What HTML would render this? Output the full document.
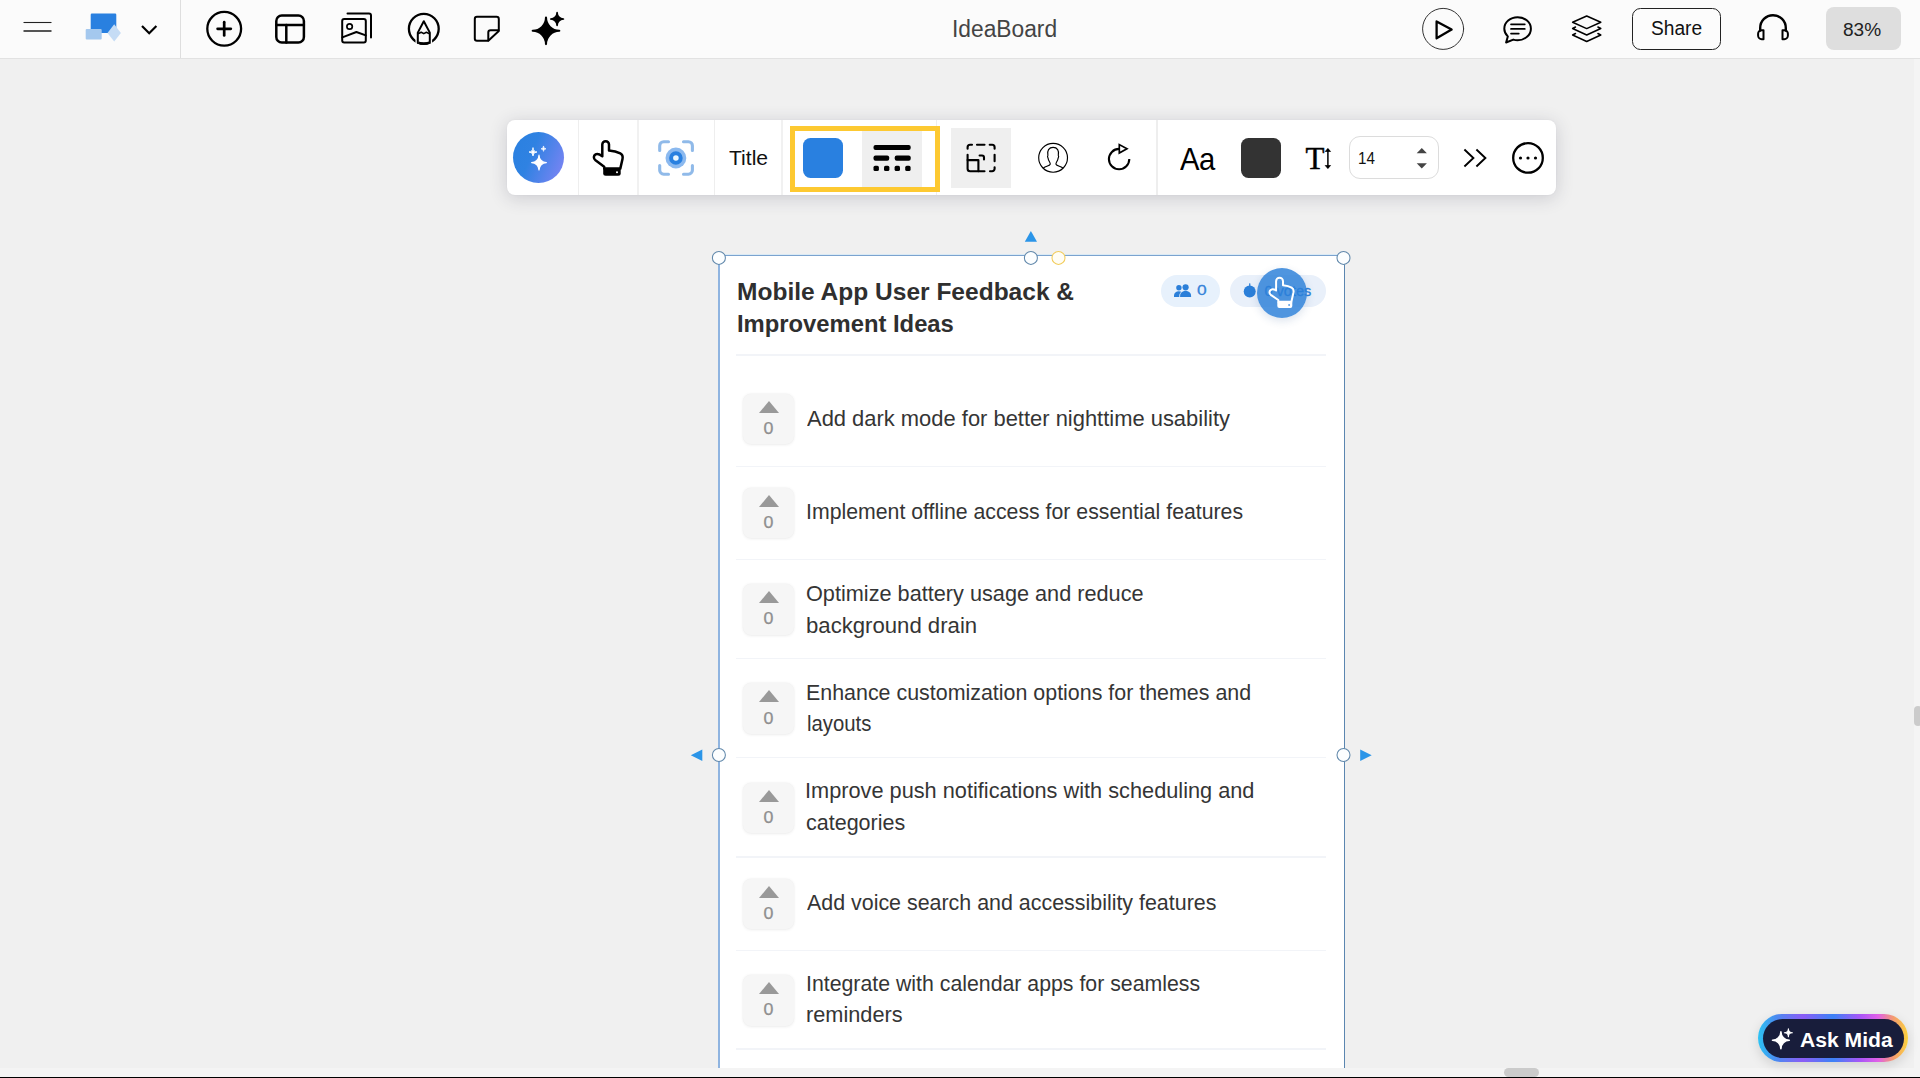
<!DOCTYPE html>
<html lang="en">
<head>
<meta charset="utf-8">
<title>IdeaBoard</title>
<style>
*{box-sizing:border-box;margin:0;padding:0}
html,body{width:1920px;height:1078px;overflow:hidden;background:#f0f0f0;font-family:"Liberation Sans",sans-serif;color:#333}
.abs{position:absolute}
#topbar{position:absolute;left:0;top:0;width:1920px;height:59px;background:#fbfbfb;border-bottom:1px solid #e2e2e2}
#topbar .vsep{position:absolute;left:180px;top:0;width:1px;height:58px;background:#dedede}
#topbar svg{position:absolute;overflow:visible}
#title{position:absolute;font-size:23.5px;line-height:30px;color:#444;white-space:nowrap;transform-origin:0 50%}
#share{position:absolute;left:1632px;top:8px;width:89px;height:42px;border:1.4px solid #222;border-radius:8.500px;background:#fcfcfc}
#sharet{position:absolute;font-size:19.5px;line-height:26px;color:#111;white-space:nowrap;transform-origin:0 50%}
#zoom{position:absolute;left:1826px;top:7px;width:75px;height:43px;border-radius:8px;background:#dedede}
#zoomt{position:absolute;font-size:18px;line-height:24px;color:#222;white-space:nowrap;transform-origin:0 50%}
/* floating toolbar */
#tb{position:absolute;left:507px;top:120px;width:1049px;height:75px;background:#fff;border-radius:8px;box-shadow:0 3px 18px rgba(40,40,70,.19),0 0 2px rgba(60,60,80,.05)}
#tb .sep{position:absolute;top:0;width:1px;height:75px;background:#eeeeee}
#tb svg{position:absolute;overflow:visible}
/* card */
#card{position:absolute;left:718px;top:254.600px;width:627.300px;height:813.400px;background:#fff;border-left:2px solid #8fb4e0;border-top:1.500px solid #7ba3cf;border-right:1.300px solid #5b86b0;box-shadow:0 -1px 0 rgba(200,230,250,.55)}
.hsep{position:absolute;left:736px;width:590px;height:1.4px;background:#f2f4f8}
.vbox{position:absolute;left:743.200px;width:50.700px;height:50.700px;border-radius:8px;background:#f6f6f6;box-shadow:0 0 0 .5px rgba(0,0,0,.02),0 .5px 3px rgba(0,0,0,.07)}
.vbox i{position:absolute;left:15.500px;top:7.200px;width:0;height:0;border-left:10.100px solid transparent;border-right:10.100px solid transparent;border-bottom:12.700px solid #999}
.vbox b{position:absolute;left:0;top:25.300px;width:51px;text-align:center;font-weight:400;font-size:16.500px;line-height:18px;color:#8f8f8f;transform:scaleX(1.08);-webkit-text-stroke:.25px #8f8f8f}
.it{position:absolute;font-size:21.5px;line-height:30px;color:#353535;white-space:nowrap;transform-origin:0 50%}
.ttl{position:absolute;font-weight:700;font-size:23.5px;line-height:32px;color:#2f2f2f;white-space:nowrap;transform-origin:0 50%}
.h{position:absolute;width:14px;height:14px;border-radius:50%;background:#fff;border:1.3px solid #5b8bb8}
</style>
</head>
<body>
<div id="topbar">
<div class="vsep"></div>
<svg style="left:0;top:0" width="620" height="58" viewBox="0 0 620 58" fill="none" stroke="#000" stroke-linecap="round" stroke-linejoin="round">
<!-- hamburger -->
<line x1="23.5" y1="22.5" x2="51.5" y2="22.5" stroke="#222" stroke-width="1.1" stroke-linecap="butt"/>
<line x1="23.5" y1="31" x2="51.5" y2="31" stroke="#555" stroke-width="2" stroke-linecap="butt"/>
<!-- shapes logo -->
<rect x="90.7" y="13.6" width="25.6" height="19.3" rx="1.2" fill="#2980e0" stroke="none"/>
<rect x="85.7" y="28.9" width="16" height="10.5" rx="1" fill="#a4c8ee" stroke="none"/>
<polygon points="114.2,24.2 120.9,32.9 114.2,41.6 107.5,32.9" fill="#c5dcf5" stroke="none"/>
<!-- chevron -->
<polyline points="142,26 149.2,33.2 156.4,26" stroke-width="2.2" stroke-linecap="butt" stroke-linejoin="miter"/>
<!-- plus circle -->
<circle cx="224.2" cy="28.8" r="16.9" stroke-width="2.3"/>
<line x1="217.6" y1="28.8" x2="230.8" y2="28.8" stroke-width="2.7"/>
<line x1="224.2" y1="22.2" x2="224.2" y2="35.4" stroke-width="2.7"/>
<!-- layout -->
<rect x="276.3" y="15.4" width="27.6" height="27.2" rx="5.5" stroke-width="2.5"/>
<line x1="276.3" y1="24.9" x2="303.9" y2="24.9" stroke-width="2.5"/>
<line x1="286.3" y1="25" x2="286.3" y2="42.5" stroke-width="2.5"/>
<!-- images -->
<rect x="342.2" y="18.9" width="23.6" height="23.5" rx="2" stroke-width="2"/>
<path d="M347.5 13.6 H369 a2 2 0 0 1 2 2 V37.5" stroke-width="2"/>
<circle cx="349.6" cy="26.5" r="2.7" stroke-width="1.7"/>
<polyline points="342.3,37.4 356.4,32 365.8,35.4" stroke-width="1.9"/>
<!-- pencil circle -->
<circle cx="423.8" cy="28.8" r="14.9" stroke-width="2.3"/>
<path d="M417.800 33.500 V44 M429.800 33.500 V44" stroke="#fbfbfb" stroke-width="4.600" stroke-linecap="butt"/>
<path d="M418.300 42.640 A14.900 14.900 0 0 0 429.300 42.640" stroke-width="2.300" stroke-linecap="butt"/>
<path d="M417.800 43 V32.600 L423.800 21.200 L429.800 32.600 V43" stroke-width="2"/>
<polyline points="418.600,33.400 421.200,32.200 423.800,33.600 426.400,32.200 429,33.400" stroke-width="1.600"/>
<!-- sticky -->
<path d="M477 16.8 H496.6 a2.2 2.2 0 0 1 2.2 2.2 V31 L488.3 40.7 H477 a2.2 2.2 0 0 1 -2.2 -2.2 V19 a2.2 2.2 0 0 1 2.2 -2.2 Z" stroke-width="2"/>
<path d="M488.3 40.4 V32.5 a2.3 2.3 0 0 1 2.3 -2.3 H498.4" stroke-width="2"/>
<!-- sparkle -->
<path d="M546.00 17.50 A13.30 13.30 0 0 0 559.30 30.80 A13.30 13.30 0 0 0 546.00 44.10 A13.30 13.30 0 0 0 532.70 30.80 A13.30 13.30 0 0 0 546.00 17.50 Z" fill="#000" stroke="#000" stroke-width="2.1" stroke-linejoin="round"/>
<path d="M557.10 12.70 A6.30 6.30 0 0 0 563.40 19.00 A6.30 6.30 0 0 0 557.10 25.30 A6.30 6.30 0 0 0 550.80 19.00 A6.30 6.30 0 0 0 557.10 12.70 Z" fill="#000" stroke="#000" stroke-width="1.7" stroke-linejoin="round"/>
</svg>
<svg style="left:1400px;top:0" width="420" height="58" viewBox="1400 0 420 58" fill="none" stroke="#000" stroke-linecap="round" stroke-linejoin="round">
<!-- play -->
<circle cx="1443.1" cy="28.9" r="20.5" stroke="#333" stroke-width="1"/>
<path d="M1436.6 21.4 L1451.6 29.6 L1436.6 38.3 Z" stroke-width="2.3"/>
<!-- chat -->
<path d="M1517.6 17.2 c7.4 0 13.3 5.1 13.3 11.5 s-5.9 11.5 -13.3 11.5 c-1.5 0 -3 -0.2 -4.300 -0.600 l-7.200 2.900 l1.700 -6.100 c-2.200 -2.100 -3.500 -4.800 -3.500 -7.700 c0 -6.400 5.900 -11.500 13.300 -11.500 Z" stroke-width="2"/>
<line x1="1511" y1="24.3" x2="1524.8" y2="24.3" stroke-width="1.7"/>
<line x1="1511" y1="28.9" x2="1524.8" y2="28.9" stroke-width="1.7"/>
<line x1="1511" y1="33.6" x2="1518.8" y2="33.6" stroke-width="1.7"/>
<!-- layers -->
<path d="M1586.700 16 L1600.800 22.300 L1586.700 28.600 L1572.600 22.300 Z" stroke-width="1.5"/>
<path d="M1575.500 27 L1572.600 28.500 L1586.700 35 L1600.800 28.500 L1597.900 27" stroke-width="1.5"/>
<path d="M1575.500 33.500 L1572.600 35 L1586.700 41.500 L1600.800 35 L1597.900 33.500" stroke-width="1.5"/>
<!-- headphones -->
<path d="M1760.2 30.5 V28 a12.8 12.8 0 0 1 25.600 0 V30.500" stroke-width="2.4"/>
<path d="M1763.500 30.200 v9 h-1.800 a3.600 3.600 0 0 1 -3.600 -3.600 v-1.800 a3.600 3.600 0 0 1 3.600 -3.600 Z" stroke-width="2"/>
<path d="M1782.500 30.200 v9 h1.800 a3.600 3.600 0 0 0 3.600 -3.600 v-1.800 a3.600 3.600 0 0 0 -3.600 -3.600 Z" stroke-width="2"/>
</svg>

<div id="title" style="left:951.66px;top:13.80px;transform:scaleX(0.9686)">IdeaBoard</div>
<div id="share"></div><div id="sharet" style="left:1650.93px;top:15px;transform:scaleX(0.9820)">Share</div>
<div id="zoom"></div><div id="zoomt" style="left:1843.47px;top:17.60px;transform:scaleX(1.0600)">83%</div>
</div>
<div id="tb">
<div class="sep" style="left:71px"></div>
<div class="sep" style="left:130px;width:2px;background:#f1f1f1"></div>
<div class="sep" style="left:207px"></div>
<div class="sep" style="left:274px;width:2px;background:#f1f1f1"></div>
<div class="sep" style="left:429px"></div>
<div class="sep" style="left:649px;width:2px;background:#eeeeee"></div>
<div class="abs" style="left:6px;top:12px;width:51px;height:51px;border-radius:50%;background:linear-gradient(112deg,#2a80e0 0%,#2f82e2 38%,#7d84f4 96%)"></div>
<div class="abs" style="left:355px;top:10px;width:60px;height:57px;background:#efefef"></div>
<div class="abs" style="left:283.300px;top:5.600px;width:150px;height:66px;border:5px solid #fdc931"></div>
<div class="abs" style="left:295.800px;top:17.900px;width:40.200px;height:40px;border-radius:7.500px;background:#2980e0"></div>
<div class="abs" style="left:444px;top:8px;width:60px;height:60px;background:#efefef"></div>
<div class="abs" id="ttl" style="transform-origin:0 50%;left:222.26px;top:25px;font-size:19.5px;line-height:26px;color:#111;transform:scaleX(1.0829)">Title</div>
<div class="abs" id="aa" style="transform-origin:0 50%;left:672.54px;top:18.50px;font-size:32px;line-height:40px;color:#000;letter-spacing:-0.5px;transform:scaleX(0.9132)">Aa</div>
<div class="abs" style="left:734px;top:17.900px;width:40.100px;height:39.900px;border-radius:7.500px;background:#333"></div>
<div class="abs" id="tt" style="transform-origin:0 50%;left:798.50px;top:19px;font-family:'Liberation Serif',serif;font-size:31px;line-height:40px;color:#000;-webkit-text-stroke:.45px #000;transform:scaleX(1.0000)">T</div>
<div class="abs" style="left:842px;top:16px;width:90px;height:43px;border:1px solid #dcdcdc;border-radius:11px;background:#fff"></div>
<div class="abs" id="n14" style="transform-origin:0 50%;left:850.85px;top:29.00px;font-size:16px;line-height:20px;color:#111;transform:scaleX(0.9471)">14</div>
<svg style="left:0;top:0" width="1049" height="75" viewBox="507 120 1049 75" fill="none" stroke="#000" stroke-linecap="round" stroke-linejoin="round">
<!-- sparkles in circle -->
<g fill="#fff" stroke="none">
<path d="M539.00 155.20 A7.40 7.40 0 0 0 546.40 162.60 A7.40 7.40 0 0 0 539.00 170.00 A7.40 7.40 0 0 0 531.60 162.60 A7.40 7.40 0 0 0 539.00 155.20 Z" stroke="#fff" stroke-width="1.2" stroke-linejoin="round"/>
<path d="M533.00 148.00 A4.00 4.00 0 0 0 537.00 152.00 A4.00 4.00 0 0 0 533.00 156.00 A4.00 4.00 0 0 0 529.00 152.00 A4.00 4.00 0 0 0 533.00 148.00 Z" stroke="#fff" stroke-width="0.9" stroke-linejoin="round"/>
<path d="M543.50 146.35 A2.50 2.50 0 0 0 546.00 148.85 A2.50 2.50 0 0 0 543.50 151.35 A2.50 2.50 0 0 0 541.00 148.85 A2.50 2.50 0 0 0 543.50 146.35 Z" stroke="#fff" stroke-width="0.7" stroke-linejoin="round"/>
</g>
<!-- hand pointer -->
<path d="M602.300 156.200 V144.600 a3.350 3.350 0 0 1 6.700 0 V150.600 C613 150.900 617.500 152 620.300 153.400 C622.400 154.500 623 156.600 622.500 159 L620.300 168.600 H604.200 V166.800 L595.500 160.300 C593.200 158.400 593.400 155.600 595.600 154.400 C597.400 153.400 599.500 154.200 602.300 156.200 Z" fill="#fff" stroke-width="2.500"/>
<path d="M603.200 168.600 H620.700 V173.200 a2.500 2.500 0 0 1 -2.500 2.500 H605.700 a2.500 2.500 0 0 1 -2.500 -2.500 Z" fill="#000" stroke="none"/>
<circle cx="617" cy="172.300" r="1" fill="#fff" stroke="none"/>
<!-- focus icon -->
<g stroke="#90bae9" stroke-width="3.100">
<path d="M659.700 150.500 V145.700 a4 4 0 0 1 4 -4 H668.500"/>
<path d="M683.500 141.700 H688.400 a4 4 0 0 1 4 4 V150.500"/>
<path d="M692.400 165.500 V170.200 a4 4 0 0 1 -4 4 H683.500"/>
<path d="M668.500 174.200 H663.700 a4 4 0 0 1 -4 -4 V165.500"/>
</g>
<circle cx="675.900" cy="158" r="10.400" fill="#8bb9ef" stroke="none"/>
<circle cx="675.900" cy="158" r="4.800" fill="#eaf7ff" stroke="#2980e0" stroke-width="4"/>
<!-- line style -->
<g fill="#000" stroke="none">
<rect x="873.500" y="144.900" width="37.200" height="5.100" rx="2"/>
<rect x="873.500" y="155.400" width="15.700" height="5.300" rx="2"/>
<rect x="894.700" y="155.400" width="16" height="5.300" rx="2"/>
<rect x="873.500" y="165.800" width="5.400" height="5.300" rx="1.600"/>
<rect x="884" y="165.800" width="5.400" height="5.300" rx="1.600"/>
<rect x="894.600" y="165.800" width="5.400" height="5.300" rx="1.600"/>
<rect x="905.200" y="165.800" width="5.400" height="5.300" rx="1.600"/>
</g>
<!-- dashed square -->
<g stroke-width="2.100">
<path d="M967.600 148.700 V147.200 a2.500 2.500 0 0 1 2.500 -2.500 H972"/>
<path d="M977 144.700 H984.500"/>
<path d="M989.700 144.700 H992.100 a2.500 2.500 0 0 1 2.500 2.500 V148.700"/>
<path d="M994.600 154.800 V161.200"/>
<path d="M994.600 167.300 V168.800 a2.500 2.500 0 0 1 -2.500 2.500 H990"/>
<path d="M967.600 154.800 V168.800 a2.500 2.500 0 0 0 2.500 2.500 H984.500"/>
<path d="M967.600 160.100 H978.400 V171.300"/>
<path d="M979.600 155.500 H982 a2 2 0 0 1 2 2 V159.500"/>
</g>
<!-- user -->
<circle cx="1053.100" cy="157.800" r="14.400" stroke-width="1.150"/>
<path d="M1043.700 167.800 C1046 166.300 1049.700 165.800 1050.200 164.300 C1050.600 163 1049.500 162 1048.800 160.500 C1048.200 159.300 1048.400 158.800 1047.900 157.800 C1047.500 157 1047.500 156 1047.900 155.500 C1046.800 150.500 1049 147.400 1053.100 147.400 C1057.200 147.400 1059.400 150.500 1058.300 155.500 C1058.700 156 1058.700 157 1058.300 157.800 C1057.800 158.800 1058 159.300 1057.400 160.500 C1056.700 162 1055.600 163 1056 164.300 C1056.500 165.800 1060.200 166.300 1062.500 167.800" stroke-width="1.150"/>
<!-- refresh -->
<path d="M1119.100 148.900 A10.200 10.200 0 1 0 1129.300 159.100" stroke-width="2.100" stroke-linecap="butt"/>
<path d="M1119.300 144.600 V153.100 L1127 148.800 Z" stroke-width="1.700" stroke-linejoin="miter"/>
<!-- T arrow -->
<line x1="1327.900" y1="149.500" x2="1327.900" y2="167.500" stroke-width="1.500"/>
<path d="M1325.500 151.200 L1327.900 148.500 L1330.300 151.200 Z" fill="#000" stroke-width="0.800"/>
<path d="M1325.500 165.800 L1327.900 168.500 L1330.300 165.800 Z" fill="#000" stroke-width="0.800"/>
<!-- spinner -->
<path d="M1416.700 153.300 L1421.800 148.100 L1426.900 153.300 Z" fill="#444" stroke="none"/>
<path d="M1416.700 163.200 L1421.800 168.600 L1426.900 163.200 Z" fill="#444" stroke="none"/>
<!-- >> -->
<polyline points="1464.400,149.500 1473.400,158 1464.400,166.500" stroke-width="1.900" stroke-linecap="butt" stroke-linejoin="miter"/>
<polyline points="1476.400,149.500 1485.400,158 1476.400,166.500" stroke-width="1.900" stroke-linecap="butt" stroke-linejoin="miter"/>
<!-- more -->
<circle cx="1528" cy="157.900" r="14.800" stroke-width="2.300"/>
<circle cx="1520.500" cy="158" r="1.600" fill="#000" stroke="none"/>
<circle cx="1528" cy="158" r="1.600" fill="#000" stroke="none"/>
<circle cx="1535.500" cy="158" r="1.600" fill="#000" stroke="none"/>
</svg>
</div>
<div id="card"></div>
<div class="ttl" id="h1" style="left:737.22px;top:275.56px;transform:scaleX(1.0436)">Mobile App User Feedback &amp;</div>
<div class="ttl" id="h2" style="left:737.28px;top:307.86px;transform:scaleX(1.0123)">Improvement Ideas</div>
<div class="hsep" style="top:354.2px"></div>
<div class="hsep" style="top:465.7px"></div>
<div class="hsep" style="top:558.5px"></div>
<div class="hsep" style="top:657.8px"></div>
<div class="hsep" style="top:756.7px"></div>
<div class="hsep" style="top:856.2px"></div>
<div class="hsep" style="top:949.9px"></div>
<div class="hsep" style="top:1048.2px"></div>
<div class="vbox" style="top:393.8px"><i></i><b>0</b></div>
<div class="vbox" style="top:487.6px"><i></i><b>0</b></div>
<div class="vbox" style="top:583.9px"><i></i><b>0</b></div>
<div class="vbox" style="top:683.3px"><i></i><b>0</b></div>
<div class="vbox" style="top:782.5px"><i></i><b>0</b></div>
<div class="vbox" style="top:878.8px"><i></i><b>0</b></div>
<div class="vbox" style="top:974.9px"><i></i><b>0</b></div>
<div class="it" id="t1" style="left:807.09px;top:403.55px;transform:scaleX(1.0199)">Add dark mode for better nighttime usability</div>
<div class="it" id="t2" style="left:805.52px;top:497.05px;transform:scaleX(0.9894)">Implement offline access for essential features</div>
<div class="it" id="t3a" style="left:806.09px;top:579.05px;transform:scaleX(1.0087)">Optimize battery usage and reduce</div>
<div class="it" id="t3b" style="left:805.66px;top:610.65px;transform:scaleX(1.0299)">background drain</div>
<div class="it" id="t4a" style="left:805.51px;top:677.55px;transform:scaleX(0.9959)">Enhance customization options for themes and</div>
<div class="it" id="t4b" style="left:806.79px;top:709.05px;transform:scaleX(0.9451)">layouts</div>
<div class="it" id="t5a" style="left:805.48px;top:776.35px;transform:scaleX(1.0109)">Improve push notifications with scheduling and</div>
<div class="it" id="t5b" style="left:806.10px;top:808.15px;transform:scaleX(1.0001)">categories</div>
<div class="it" id="t6" style="left:807.10px;top:888.25px;transform:scaleX(0.9958)">Add voice search and accessibility features</div>
<div class="it" id="t7a" style="left:805.52px;top:968.75px;transform:scaleX(0.9904)">Integrate with calendar apps for seamless</div>
<div class="it" id="t7b" style="left:805.68px;top:1000.25px;transform:scaleX(1.0108)">reminders</div>


<!-- pills -->
<div class="abs" style="left:1161px;top:274.5px;width:58.5px;height:32.5px;border-radius:17px;background:#e7f1fc"></div>
<div class="abs" style="left:1230px;top:274.5px;width:96px;height:32.5px;border-radius:17px;background:#e9f0fa"></div>
<div class="abs" id="p0" style="transform-origin:0 50%;left:1197.3px;top:280px;font-size:15.5px;line-height:20px;color:#3784d9;-webkit-text-stroke:.3px #3784d9;transform:scaleX(1.12)">0</div>
<div class="abs" id="pv" style="-webkit-text-stroke:.3px #2b7fd9;transform-origin:0 50%;left:1264.5px;top:281px;font-size:14.5px;line-height:20px;color:#2b7fd9;white-space:nowrap">0 votes</div>
<svg class="abs" style="left:1150px;top:260px;overflow:visible" width="200" height="70" viewBox="1150 260 200 70">
<!-- people icon -->
<g fill="#2b7fd9">
<circle cx="1178.900" cy="287.800" r="2.700"/>
<path d="M1174 296.900 v-1.300 c0 -2.600 2.100 -4.300 4.900 -4.300 c0.900 0 1.700 0.200 2.400 0.500 c-1.300 1.100 -2 2.600 -2 4.300 v0.800 Z"/>
<circle cx="1185.600" cy="287.300" r="3.100"/>
<path d="M1180.100 296.900 v-1 c0 -3 2.400 -4.800 5.500 -4.800 s5.500 1.800 5.500 4.800 v1 Z"/>
<circle cx="1249.700" cy="291.600" r="6"/>
<rect x="1249.100" y="283.200" width="1.300" height="3.500" rx="0.600"/>
</g>
</svg>
<!-- big cursor circle -->
<div class="abs" style="left:1257px;top:268px;width:50px;height:50px;border-radius:50%;background:rgba(43,127,217,.83);box-shadow:0 3px 8px rgba(40,80,140,.16)"></div>
<svg class="abs" style="left:1257px;top:268px;overflow:visible" width="50" height="50" viewBox="1257 268 50 50" fill="none" stroke="#fff" stroke-linecap="round" stroke-linejoin="round">
<path d="M1276.100 290.500 V281.200 a3.450 3.450 0 0 1 6.900 0 V285.300 C1286 285.600 1289.500 286.400 1291.600 287.600 C1293.400 288.600 1293.900 290.400 1293.500 292.400 L1291.400 301.700 H1278.300 V300 L1270.800 294.900 C1268.900 293.400 1269.100 290.900 1270.900 289.800 C1272.500 288.900 1274 289.300 1276.100 290.500 Z" stroke-width="2"/>
<path d="M1277.300 301.700 H1292.300 V306 a2 2 0 0 1 -2 2 H1279.300 a2 2 0 0 1 -2 -2 Z" fill="#fff" stroke="none"/>
<circle cx="1289.100" cy="305" r="0.900" fill="#4d95e3" stroke="none"/>
</svg>
<!-- selection handles -->
<svg class="abs" style="left:680px;top:225px;overflow:visible" width="700" height="560" viewBox="680 225 700 560">
<g fill="#2b95e8">
<polygon points="1030.900,231 1037,241.700 1024.800,241.700"/>
<polygon points="690.800,755.300 702.300,749.600 702.300,761"/>
<polygon points="1371.700,755.300 1360.200,749.600 1360.200,761"/>
</g>
<g fill="#fcfeff" stroke="#6188ab" stroke-width="1.050">
<circle cx="718.900" cy="257.900" r="6.500"/>
<circle cx="1030.900" cy="257.900" r="6.500"/>
<circle cx="1343.500" cy="257.900" r="6.500"/>
<circle cx="718.900" cy="755" r="6.500"/>
<circle cx="1343.500" cy="755" r="6.500"/>
<circle cx="1058.500" cy="257.900" r="6.500" fill="#fffdf5" stroke="#f2cc5a"/>
</g>
</svg>
<!-- scrollbars -->
<div class="abs" style="left:0;top:1068px;width:1920px;height:9px;background:#f4f4f4"></div>
<div class="abs" style="left:1914px;top:59px;width:6px;height:1018px;background:#f4f4f4"></div>
<div class="abs" style="left:1504px;top:1068px;width:35px;height:8.500px;border-radius:4.500px;background:#cbcbcb"></div>
<div class="abs" style="left:1914.300px;top:706px;width:8px;height:20px;border-radius:4px;background:#cbcbcb"></div>
<div class="abs" style="left:0;top:1076.700px;width:1920px;height:2px;background:#000"></div>
<!-- ask mida -->
<div class="abs" style="left:1758px;top:1014px;width:150px;height:48px;border-radius:24px;box-shadow:0 4px 12px rgba(0,0,0,.13);background:linear-gradient(90deg,#2cc3f3 0%,#4a8af0 12%,#8b5cf6 30%,#3b82f6 50%,#a855f7 68%,#e060e8 80%,#f39a72 90%,#fbd23c 100%)"></div>
<div class="abs" style="left:1762.500px;top:1018.500px;width:141px;height:39px;border-radius:20px;background:#181d3b"></div>
<div class="abs" id="ask" style="left:1799.800px;top:1025.700px;transform:scaleX(1.055);font-size:20px;line-height:28px;font-weight:700;color:#fff;white-space:nowrap;transform-origin:0 50%">Ask Mida</div>
<svg class="abs" style="left:1765px;top:1020px;overflow:visible" width="40" height="36" viewBox="1765 1020 40 36" fill="#fff">
<path d="M1780.90 1031.90 A8.40 8.40 0 0 0 1789.30 1040.30 A8.40 8.40 0 0 0 1780.90 1048.70 A8.40 8.40 0 0 0 1772.50 1040.30 A8.40 8.40 0 0 0 1780.90 1031.90 Z" stroke="#fff" stroke-width="1.6" stroke-linejoin="round"/>
<path d="M1788.40 1028.80 A4.00 4.00 0 0 0 1792.40 1032.80 A4.00 4.00 0 0 0 1788.40 1036.80 A4.00 4.00 0 0 0 1784.40 1032.80 A4.00 4.00 0 0 0 1788.40 1028.80 Z" stroke="#fff" stroke-width="1.1" stroke-linejoin="round"/>
</svg>
</body>
</html>
